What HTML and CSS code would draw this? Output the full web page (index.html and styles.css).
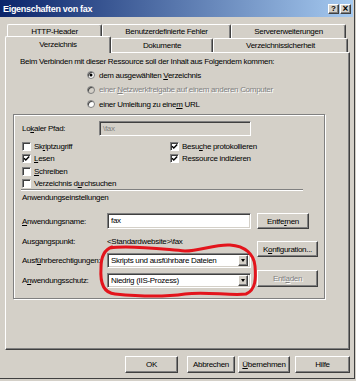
FILE: index.html
```html
<!DOCTYPE html>
<html lang="de">
<head>
<meta charset="utf-8">
<title>Eigenschaften von fax</title>
<link rel="stylesheet" href="styles.css">
</head>
<body>
<div class="window">
  <div class="titlebar">
    <span class="title">Eigenschaften von fax</span>
    <span class="tbtn">?</span><span class="tbtn close">×</span>
  </div>
  <div class="tabs">
    <div class="tabrow back">
      <div class="tab t-http">HTTP-Header</div>
      <div class="tab t-fehler">Benutzerdefinierte Fehler</div>
      <div class="tab t-server">Servererweiterungen</div>
    </div>
    <div class="tabrow front">
      <div class="tab t-verz active">Verzeichnis</div>
      <div class="tab t-dok">Dokumente</div>
      <div class="tab t-sich">Verzeichnissicherheit</div>
    </div>
  </div>
  <div class="panel">
    <div class="intro">Beim Verbinden mit dieser Ressource soll der Inhalt aus Folgendem kommen:</div>
    <div class="radios">
      <div class="radio-row"><span class="radio checked"></span><span>dem ausgewählten <u>V</u>erzeichnis</span></div>
      <div class="radio-row disabled"><span class="radio"></span><span>einer <u>N</u>etzwerkfreigabe auf einem anderen Computer</span></div>
      <div class="radio-row"><span class="radio"></span><span>einer Umleitung zu eine<u>m</u> URL</span></div>
    </div>
    <div class="group">
      <div class="path-row"><span class="path-label">Lo<u>k</u>aler Pfad:</span><div class="field path-field">\fax</div></div>
      <div class="checks">
        <div class="check-row"><span class="cb"></span><span>Sk<u>r</u>iptzugriff</span></div>
        <div class="check-row"><span class="cb checked"><svg viewBox="0 0 7 7" width="7" height="7"><path d="M1 3.2 L2.8 5 L6.2 1.4" /></svg></span><span>Besu<u>c</u>he protokollieren</span></div>
        <div class="check-row"><span class="cb checked"><svg viewBox="0 0 7 7" width="7" height="7"><path d="M1 3.2 L2.8 5 L6.2 1.4" /></svg></span><span><u>L</u>esen</span></div>
        <div class="check-row"><span class="cb checked"><svg viewBox="0 0 7 7" width="7" height="7"><path d="M1 3.2 L2.8 5 L6.2 1.4" /></svg></span><span>Ressource indizieren</span></div>
        <div class="check-row"><span class="cb"></span><span><u>S</u>chreiben</span></div>
        <div></div>
        <div class="check-row"><span class="cb"></span><span>Verzeichnis d<u>u</u>rchsuchen</span></div>
      </div>
      <div class="sep"></div>
      <div class="section-title">Anwendungseinstellungen</div>
      <div class="app">
        <div class="app-grid">
          <span class="app-label"><u>A</u>nwendungsname:</span>
          <div class="field name-field">fax</div>
          <span class="app-label">Ausgangspunkt:</span>
          <span class="value">&lt;Standardwebsite&gt;\fax</span>
          <span class="app-label">Ausf<u>ü</u>hrberechtigungen:</span>
          <div class="field combo"><span class="combo-text">Skripts und ausführbare Dateien</span><span class="drop"></span></div>
          <span class="app-label">A<u>n</u>wendungsschutz:</span>
          <div class="field combo"><span class="combo-text">Niedrig (IIS-Prozess)</span><span class="drop"></span></div>
        </div>
        <div class="app-buttons">
          <button class="btn b-entf">Entfe<u>r</u>nen</button>
          <button class="btn b-konf">K<u>o</u>nfiguration...</button>
          <button class="btn b-entl disabled">Entl<u>a</u>den</button>
        </div>
      </div>
    </div>
  </div>
  <div class="footer">
    <button class="btn f-ok">OK</button>
    <button class="btn f-abb">Abbrechen</button>
    <button class="btn f-ueb"><u>Ü</u>bernehmen</button>
    <button class="btn f-hilfe">Hilfe</button>
  </div>
  <svg class="annotation" viewBox="0 0 356 381" width="356" height="381">
    <path d="M110 248 C130 245,160 249,185 251 C200 251,215 244,230 245 C245 246,254 254,255 266 C256 278,256 290,246 294 C230 296,205 291,185 294 C165 297,135 296,115 294 C103 293,100 282,101 268 C101 258,103 250,112 247" />
  </svg>
</div>
</body>
</html>
```
FILE: styles.css
```css
* { box-sizing: border-box; }

body {
  margin: 0;
  background: #d4d0c8;
  font-family: "Liberation Sans", Arial, sans-serif;
  font-size: 8px;
  letter-spacing: -0.3px;
  color: #000;
}

u { text-decoration-thickness: 1px; text-underline-offset: 1px; }

.window {
  position: relative;
  width: 355px;
  height: 379px;
  background: #d4d0c8;
  border-right: 1px solid #404040;
  border-bottom: 1px solid #404040;
}

.titlebar {
  display: flex;
  align-items: center;
  width: 353px;
  height: 17px;
  padding: 0 2px 0 3px;
  background: linear-gradient(to right, #0a246a, #a6caf0);
  color: #fff;
  font-size: 9px;
  font-weight: bold;
}

.title { flex: 1; white-space: nowrap; }

.tbtn {
  width: 11px;
  height: 10px;
  background: #d4d0c8;
  border: 1px solid;
  border-color: #fff #404040 #404040 #fff;
  box-shadow: inset -1px -1px #808080;
  color: #000;
  font-size: 8px;
  font-weight: bold;
  line-height: 8px;
  letter-spacing: 0;
  text-align: center;
}

.tbtn.close { margin-left: 1px; font-size: 10px; }

.tabs {
  margin: 7px 0 0 5px;
  width: 345px;
}

.tabrow { display: flex; height: 14px; }
.tabrow.back { margin-left: 2px; }

.tab {
  height: 14px;
  border-top: 1px solid #fff;
  border-left: 1px solid #fff;
  border-right: 1px solid #404040;
  box-shadow: inset -1px 0 #808080;
  border-radius: 2px 2px 0 0;
  text-align: center;
  line-height: 13px;
  white-space: nowrap;
}

.t-http { width: 95px; }
.t-fehler { width: 129px; }
.t-server { width: 115px; }
.t-verz { width: 106px; }
.t-dok { width: 102px; }
.t-sich { width: 135px; }

.tab.active {
  position: relative;
  z-index: 1;
  height: 17px;
  margin-top: -2px;
  background: #d4d0c8;
  line-height: 15px;
}

.panel {
  margin-left: 5px;
  width: 345px;
  height: 298px;
  border-top: 1px solid #fff;
  border-left: 1px solid #fff;
  border-right: 1px solid #404040;
  border-bottom: 1px solid #404040;
  box-shadow: inset -1px -1px #808080;
}

.intro {
  margin: 2px 0 0 14px;
  height: 13px;
  line-height: 13px;
  white-space: nowrap;
}

.radios { margin-left: 81px; }

.radio-row {
  display: flex;
  align-items: center;
  gap: 4px;
  height: 14.5px;
  white-space: nowrap;
}

.radio {
  position: relative;
  flex: none;
  width: 8px;
  height: 8px;
  border-radius: 50%;
  background: #fff;
  border: 1px solid #808080;
  box-shadow: inset 1px 1px #404040;
}

.radio.checked::after {
  content: "";
  position: absolute;
  left: 2px;
  top: 2px;
  width: 2px;
  height: 2px;
  border-radius: 50%;
  background: #000;
  box-shadow: 0 0 0 0.5px #000;
}

.radio-row.disabled { color: #808080; text-shadow: 1px 1px #fff; }
.radio-row.disabled .radio { background: #d4d0c8; }

.group {
  margin: 2.5px 0 0 7px;
  width: 312px;
  height: 185px;
  border: 1px solid #808080;
  box-shadow: inset 1px 1px #fff, 1px 1px #fff;
}

.path-row {
  display: flex;
  align-items: center;
  height: 15px;
  margin-top: 6px;
  padding-left: 8px;
}

.path-label { width: 77px; white-space: nowrap; }

.field {
  height: 15px;
  background: #fff;
  border: 1px solid;
  border-color: #808080 #fff #fff #808080;
  box-shadow: inset 1px 1px #404040, inset -1px -1px #d4d0c8;
  padding-left: 3px;
  line-height: 13px;
  white-space: nowrap;
  overflow: hidden;
}

.path-field { width: 152px; background: #d4d0c8; color: #808080; }

.checks {
  display: grid;
  grid-template-columns: 148px 1fr;
  grid-auto-rows: 12.5px;
  margin-top: 4px;
  padding-left: 8px;
}

.check-row {
  display: flex;
  align-items: center;
  gap: 3px;
  white-space: nowrap;
}

.cb {
  position: relative;
  flex: none;
  width: 9px;
  height: 9px;
  background: #fff;
  border: 1px solid;
  border-color: #808080 #fff #fff #808080;
  box-shadow: inset 1px 1px #404040;
}

.cb svg {
  position: absolute;
  left: 0;
  top: 0;
}

.cb svg path { fill: none; stroke: #000; stroke-width: 1.4; }

.sep {
  margin: -1px 0 0 7px;
  width: 282px;
  height: 2px;
  border-top: 1px solid #808080;
  border-bottom: 1px solid #fff;
}

.section-title {
  margin: 1px 0 0 8px;
  height: 12px;
  line-height: 12px;
}

.app {
  display: flex;
  margin-top: 9px;
  padding-left: 8px;
}

.app-grid {
  display: grid;
  grid-template-columns: 85px 144px;
  grid-template-rows: 16px 14px 15px 15px;
  row-gap: 5px;
  align-items: center;
}

.app-label, .value { white-space: nowrap; }

.name-field { height: 16px; line-height: 14px; }

.combo {
  display: flex;
  align-items: center;
  padding-right: 2px;
}

.combo-text { flex: 1; }

.drop {
  position: relative;
  flex: none;
  width: 10px;
  height: 11px;
  background: #d4d0c8;
  border: 1px solid;
  border-color: #fff #404040 #404040 #fff;
  box-shadow: inset -1px -1px #808080;
}

.drop::after {
  content: "";
  position: absolute;
  left: 2px;
  top: 3px;
  border-left: 2.5px solid transparent;
  border-right: 2.5px solid transparent;
  border-top: 3px solid #000;
}

.app-buttons {
  display: flex;
  flex-direction: column;
  align-items: flex-start;
  margin-left: 6px;
}

.btn {
  font: inherit;
  letter-spacing: inherit;
  color: #000;
  background: #d4d0c8;
  border: 1px solid;
  border-color: #fff #404040 #404040 #fff;
  box-shadow: inset -1px -1px #808080;
  padding: 0;
  text-align: center;
  white-space: nowrap;
}

.btn.disabled { color: #808080; text-shadow: 1px 1px #fff; }

.b-entf { width: 52px; height: 16px; }
.b-konf { width: 61px; height: 16px; margin-top: 12px; }
.b-entl { width: 61px; height: 17px; margin-top: 13px; }

.footer {
  display: flex;
  height: 17px;
  margin-top: 6px;
}

.footer .btn { height: 17px; }
.f-ok { width: 53px; margin-left: 125px; }
.f-abb { width: 48px; margin-left: 9px; }
.f-ueb { width: 52px; margin-left: 3px; }
.f-hilfe { width: 55px; margin-left: 5px; }

.annotation {
  position: absolute;
  left: 0;
  top: 0;
  pointer-events: none;
}

.annotation path {
  fill: none;
  stroke: #e3141c;
  stroke-width: 3;
  stroke-linecap: round;
  stroke-linejoin: round;
}
```
